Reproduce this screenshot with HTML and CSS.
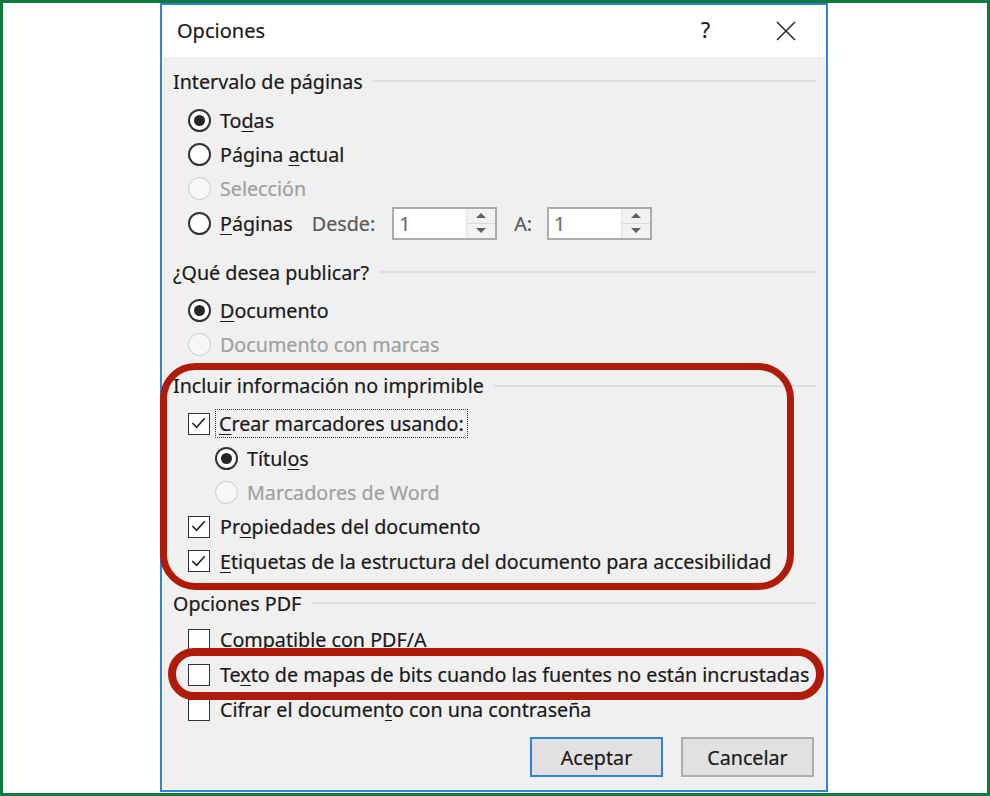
FILE: index.html
```html
<!DOCTYPE html>
<html lang="es">
<head>
<meta charset="utf-8">
<title>Opciones</title>
<link rel="stylesheet" href="styles.css">
</head>
<body>
<div class="screen">
  <div class="dialog">
    <div class="titlebar">
      <span class="title">Opciones</span>
      <span class="help">?</span>
      <span class="close">
        <svg width="22" height="22" viewBox="0 0 22 22"><path d="M2 2 L20 20 M20 2 L2 20" stroke="#2b2b2b" stroke-width="1.6" fill="none"/></svg>
      </span>
    </div>
    <div class="content">
      <section class="group g1">
        <div class="group-head"><span>Intervalo de páginas</span></div>
        <div class="rows">
          <div class="row"><span class="radio checked"></span><span class="label">To<u>d</u>as</span></div>
          <div class="row"><span class="radio"></span><span class="label">Página <u>a</u>ctual</span></div>
          <div class="row disabled"><span class="radio"></span><span class="label">Selección</span></div>
          <div class="row">
            <span class="radio"></span><span class="label"><u>P</u>áginas</span>
            <span class="spin-label desde">Desde:</span>
            <span class="spin"><span class="spin-value">1</span><span class="spin-btns"><span class="arrow up"></span><span class="arrow down"></span></span></span>
            <span class="spin-label a">A:</span>
            <span class="spin"><span class="spin-value">1</span><span class="spin-btns"><span class="arrow up"></span><span class="arrow down"></span></span></span>
          </div>
        </div>
      </section>
      <section class="group g2">
        <div class="group-head"><span>¿Qué desea publicar?</span></div>
        <div class="rows">
          <div class="row"><span class="radio checked"></span><span class="label"><u>D</u>ocumento</span></div>
          <div class="row disabled"><span class="radio"></span><span class="label">Documento con marcas</span></div>
        </div>
      </section>
      <section class="group g3">
        <div class="group-head"><span>Incluir información no imprimible</span></div>
        <div class="rows">
          <div class="row"><span class="check checked"><svg width="21" height="21" viewBox="0 0 21 21"><path d="M3.5 10 L8 14.5 L16.5 5" stroke="#222" stroke-width="1.7" fill="none"/></svg></span><span class="label focus"><u>C</u>rear marcadores usando:</span></div>
          <div class="row sub"><span class="radio checked"></span><span class="label">Títul<u>o</u>s</span></div>
          <div class="row sub disabled"><span class="radio"></span><span class="label">Marcadores de Word</span></div>
          <div class="row"><span class="check checked"><svg width="21" height="21" viewBox="0 0 21 21"><path d="M3.5 10 L8 14.5 L16.5 5" stroke="#222" stroke-width="1.7" fill="none"/></svg></span><span class="label">Pr<u>o</u>piedades del documento</span></div>
          <div class="row"><span class="check checked"><svg width="21" height="21" viewBox="0 0 21 21"><path d="M3.5 10 L8 14.5 L16.5 5" stroke="#222" stroke-width="1.7" fill="none"/></svg></span><span class="label"><u>E</u>tiquetas de la estructura del documento para accesibilidad</span></div>
        </div>
      </section>
      <section class="group g4">
        <div class="group-head"><span>Opciones PDF</span></div>
        <div class="rows">
          <div class="row"><span class="check"></span><span class="label">Compatible con PDF/A</span></div>
          <div class="row"><span class="check"></span><span class="label">Te<u>x</u>to de mapas de bits cuando las fuentes no están incrustadas</span></div>
          <div class="row"><span class="check"></span><span class="label">Cifrar el documen<u>t</u>o con una contraseña</span></div>
        </div>
      </section>
      <div class="buttons">
        <button class="btn default">Aceptar</button>
        <button class="btn">Cancelar</button>
      </div>
    </div>
  </div>
  <svg class="annotations" width="990" height="796" viewBox="0 0 990 796">
    <rect x="163.5" y="366.5" width="627" height="220" rx="32" ry="32" fill="none" stroke="#b01a08" stroke-width="7"/>
    <rect x="172" y="652" width="648" height="44" rx="22" ry="22" fill="none" stroke="#b01a08" stroke-width="8"/>
  </svg>
</div>
</body>
</html>
```
FILE: styles.css
```css
html, body {
  margin: 0;
  padding: 0;
  background: #ffffff;
}

.screen {
  position: relative;
  width: 990px;
  height: 796px;
  box-sizing: border-box;
  border: 3px solid #0f7a3c;
  background: #ffffff;
  font-family: "Noto Sans", "Open Sans", sans-serif;
  font-size: 19.7px;
  color: #1a1a1a;
  -webkit-text-stroke: 0.2px currentColor;
  overflow: hidden;
}

.dialog {
  margin-left: 157px;
  width: 668px;
  height: 789px;
  box-sizing: border-box;
  border: 2px solid #2f83d8;
  background: #ffffff;
  display: flex;
  flex-direction: column;
}

.titlebar {
  height: 52px;
  display: flex;
  align-items: center;
  padding-left: 15px;
  flex-shrink: 0;
}

.title {
  font-size: 20px;
  flex: 1;
  margin-top: -2px;
}

.help {
  font-size: 21px;
  width: 20px;
  margin-right: 54px;
  margin-top: -3px;
}

.close {
  display: flex;
  margin-right: 29px;
}

.content {
  flex: 1;
  margin: 0 1px 1px 1px;
  background: #f0f0f0;
  padding: 9px 9px 0 10px;
  display: flex;
  flex-direction: column;
}

.group-head {
  height: 30px;
  display: flex;
  align-items: center;
  gap: 10px;
}

.group-head::after {
  content: "";
  flex: 1;
  height: 2px;
  background: #dedede;
}

.g2 { margin-top: 17px; }
.g3 { margin-top: 9px; }
.g4 { margin-top: 10px; }

.rows {
  padding-left: 15px;
  padding-top: 7px;
}

.g2 .rows { padding-top: 6px; }
.g3 .rows { padding-top: 6px; }
.g4 .rows { padding-top: 4px; }

.row {
  height: 34.3px;
  display: flex;
  align-items: center;
}

.g4 .row { height: 35px; }

.row.sub {
  padding-left: 27px;
}

.label {
  margin-left: 10px;
  white-space: nowrap;
}

.radio + .label { margin-left: 9px; }

.label u {
  text-underline-offset: 3px;
}

.disabled .label {
  color: #a0a0a0;
}

.radio {
  width: 23px;
  height: 23px;
  box-sizing: border-box;
  border: 2px solid #333333;
  border-radius: 50%;
  background: #ffffff;
  display: flex;
  align-items: center;
  justify-content: center;
  flex-shrink: 0;
}

.radio.checked::after {
  content: "";
  width: 11px;
  height: 11px;
  border-radius: 50%;
  background: #262626;
}

.disabled .radio {
  border: 1.5px solid #c9c9c9;
  background: #f7f7f7;
}

.check {
  width: 22px;
  height: 22px;
  box-sizing: border-box;
  border: 1.6px solid #333333;
  background: #ffffff;
  flex-shrink: 0;
  display: flex;
  align-items: center;
  justify-content: center;
}

.label.focus {
  margin-left: 6px;
  padding: 0 3px;
  outline: 1px dotted #333;
}

.spin-label {
  color: #5a5a5a;
}

.spin-label.desde { margin-left: 19px; }
.spin-label.a { margin-left: 17px; }

.spin {
  margin-left: 17px;
  width: 105px;
  height: 33px;
  box-sizing: border-box;
  border: 2px solid #ababab;
  background: #ffffff;
  display: flex;
}

.spin-label.a + .spin { margin-left: 15px; }

.spin-value {
  flex: 1;
  color: #6d6d6d;
  padding-left: 5px;
  line-height: 29px;
}

.spin-btns {
  width: 28px;
  display: flex;
  flex-direction: column;
  background: #f2f2f2;
  border-left: 1px solid #e2e2e2;
}

.arrow {
  flex: 1;
  display: flex;
  align-items: center;
  justify-content: center;
}

.arrow.up { border-bottom: 1px solid #dcdcdc; }

.arrow.up::after {
  content: "";
  border-left: 5px solid transparent;
  border-right: 5px solid transparent;
  border-bottom: 5px solid #606060;
}

.arrow.down::after {
  content: "";
  border-left: 5px solid transparent;
  border-right: 5px solid transparent;
  border-top: 5px solid #606060;
}

.buttons {
  margin-top: 10px;
  display: flex;
  justify-content: flex-end;
  gap: 18px;
  padding-right: 2px;
}

.btn {
  width: 133px;
  height: 40px;
  box-sizing: border-box;
  font-family: inherit;
  font-size: 19.7px;
  color: #1a1a1a;
  -webkit-text-stroke: 0.2px currentColor;
  background: #e1e1e1;
  border: 2px solid #adadad;
  padding: 0;
}

.btn.default {
  border-color: #2f83d8;
}

.annotations {
  position: absolute;
  left: -3px;
  top: -3px;
  pointer-events: none;
}
```
